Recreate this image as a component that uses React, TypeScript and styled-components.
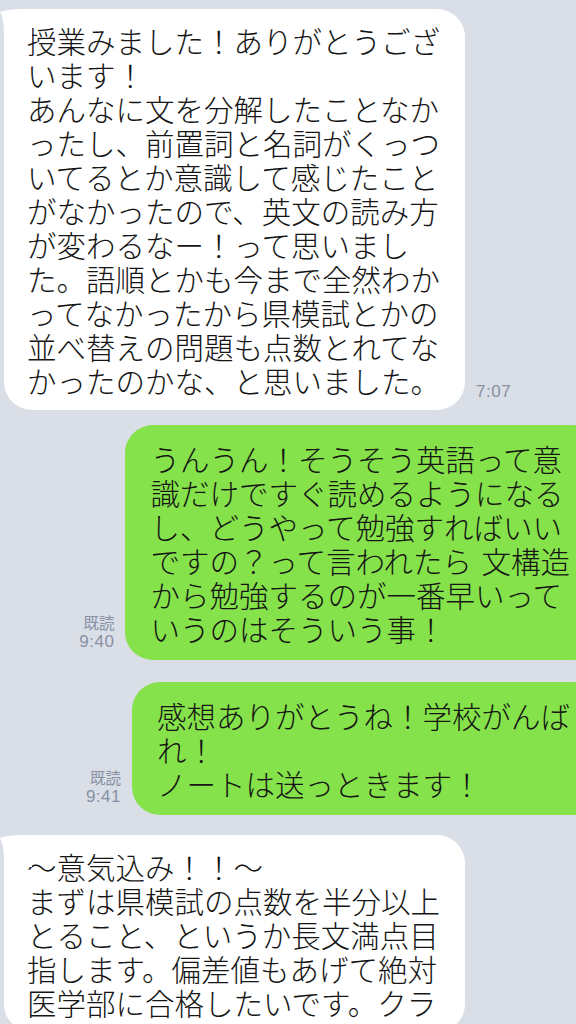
import React from "react";
import styled, { createGlobalStyle } from "styled-components";

const Global = createGlobalStyle`
  html, body {
    margin: 0;
    padding: 0;
    width: 576px;
    height: 1024px;
    overflow: hidden;
    background: #d9dee7;
  }
  #root { width: 576px; }
`;

const Chat = styled.div`
  display: flex;
  flex-direction: column;
  padding-top: 9px;
  width: 576px;
  font-family: "Noto Sans CJK JP", "Noto Sans", sans-serif;
`;

const Row = styled.div<{ $mine?: boolean; $top: number }>`
  display: flex;
  align-items: flex-end;
  justify-content: flex-start;
  flex-direction: ${(p) => (p.$mine ? "row-reverse" : "row")};
  gap: 11px;
  margin-top: ${(p) => p.$top}px;
`;

const Bubble = styled.div<{ $mine?: boolean }>`
  position: relative;
  flex: none;
  white-space: pre;
  font-size: 29.5px;
  font-weight: 300;
  line-height: 34px;
  word-spacing: 3px;
  color: #151515;
  border-radius: 28px;
  background: ${(p) => (p.$mine ? "#85e24a" : "#ffffff")};
  padding: ${(p) => (p.$mine ? "15.5px 30px 15.5px 25px" : "13.5px 25px 13.5px 23px")};
  margin: ${(p) => (p.$mine ? "0 -24px 0 0" : "0 0 0 4px")};
`;

const Tail = styled.svg`
  position: absolute;
  left: -4px;
  top: 0;
  width: 34px;
  height: 34px;
  overflow: visible;
`;

const Meta = styled.div`
  display: flex;
  flex-direction: column;
  align-items: flex-end;
  margin-bottom: 8px;
  color: #8891a3;
`;

const Read = styled.span`
  font-size: 15.5px;
  line-height: 20px;
`;

const Time = styled.span`
  font-family: "Liberation Sans", Arial, sans-serif;
  font-size: 17px;
  line-height: 20px;
  letter-spacing: 0.5px;
`;

const LeftTail = () => (
  <Tail viewBox="-4 0 34 34" aria-hidden="true">
    <path d="M-4 3 C 2 0.5 12 0 28 0 L 28 32 L 0 32 L 0 27 C 0 15 -1 8 -4 3 Z" fill="#ffffff" />
  </Tail>
);

type Msg = {
  mine?: boolean;
  text: string;
  time: string;
  read?: boolean;
  top: number;
};

const messages: Msg[] = [
  {
    top: 0,
    time: "7:07",
    text:
      "授業みました！ありがとうござ\nいます！\nあんなに文を分解したことなか\nったし、前置詞と名詞がくっつ\nいてるとか意識して感じたこと\nがなかったので、英文の読み方\nが変わるなー！って思いまし\nた。語順とかも今まで全然わか\nってなかったから県模試とかの\n並べ替えの問題も点数とれてな\nかったのかな、と思いました。",
  },
  {
    top: 15,
    mine: true,
    read: true,
    time: "9:40",
    text:
      "うんうん！そうそう英語って意\n識だけですぐ読めるようになる\nし、どうやって勉強すればいい\nですの？って言われたら 文構造\nから勉強するのが一番早いって\nいうのはそういう事！",
  },
  {
    top: 22,
    mine: true,
    read: true,
    time: "9:41",
    text: "感想ありがとうね！学校がんば\nれ！\nノートは送っときます！",
  },
  {
    top: 20,
    time: "",
    text:
      "～意気込み！！～\nまずは県模試の点数を半分以上\nとること、というか長文満点目\n指します。偏差値もあげて絶対\n医学部に合格したいです。クラ",
  },
];

export default function App() {
  return (
    <>
      <Global />
      <Chat>
        {messages.map((m, i) => (
          <Row key={i} $mine={m.mine} $top={m.top}>
            <Bubble $mine={m.mine}>
              {!m.mine && <LeftTail />}
              {m.text}
            </Bubble>
            {m.time && (
              <Meta>
                {m.read && <Read>既読</Read>}
                <Time>{m.time}</Time>
              </Meta>
            )}
          </Row>
        ))}
      </Chat>
    </>
  );
}
